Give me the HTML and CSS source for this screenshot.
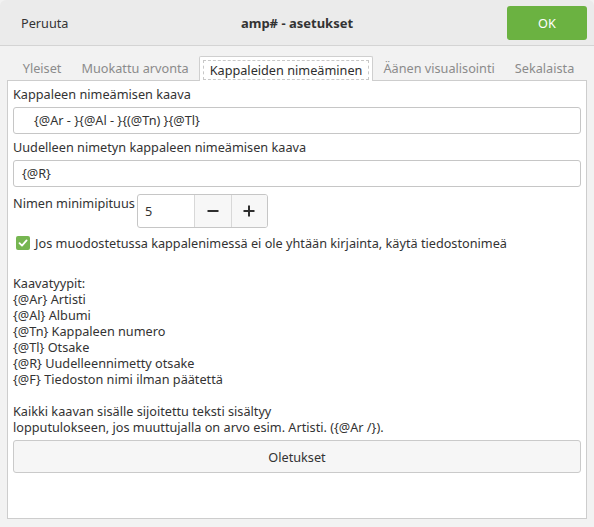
FILE: index.html
```html
<!DOCTYPE html>
<html>
<head>
<meta charset="utf-8">
<link rel="stylesheet" href="styles.css">
</head>
<body>
<div class="window">
  <header class="headerbar">
    <button class="hb-cancel">Peruuta</button>
    <div class="hb-title">amp# - asetukset</div>
    <button class="hb-ok">OK</button>
  </header>
  <div class="content">
    <nav class="tabs">
      <div class="tab">Yleiset</div>
      <div class="tab">Muokattu arvonta</div>
      <div class="tab active"><span class="focus">Kappaleiden nimeäminen</span></div>
      <div class="tab">Äänen visualisointi</div>
      <div class="tab">Sekalaista</div>
    </nav>
    <section class="panel">
      <div class="label">Kappaleen nimeämisen kaava</div>
      <div class="entry entry-indent">{@Ar - }{@Al - }{(@Tn) }{@Tl}</div>
      <div class="label">Uudelleen nimetyn kappaleen nimeämisen kaava</div>
      <div class="entry">{@R}</div>
      <div class="spinrow">
        <div class="spinlabel">Nimen minimipituus</div>
        <div class="spin">
          <div class="spin-val">5</div>
          <div class="spin-btn">
            <svg width="12" height="12" viewBox="0 0 12 12"><rect x="0.5" y="5" width="11" height="2" fill="#2e2e2e"/></svg>
          </div>
          <div class="spin-btn">
            <svg width="12" height="12" viewBox="0 0 12 12"><rect x="0.5" y="5" width="11" height="2" fill="#2e2e2e"/><rect x="5" y="0.5" width="2" height="11" fill="#2e2e2e"/></svg>
          </div>
        </div>
      </div>
      <label class="check">
        <span class="checkbox">
          <svg width="14" height="14" viewBox="0 0 14 14"><path d="M3.5 7.2 L6 9.6 L10.6 4.4" fill="none" stroke="#fff" stroke-width="1.8" stroke-linecap="round" stroke-linejoin="round"/></svg>
        </span>
        <span>Jos muodostetussa kappalenimessä ei ole yhtään kirjainta, käytä tiedostonimeä</span>
      </label>
      <div class="info">
        <p>Kaavatyypit:<br>{@Ar} Artisti<br>{@Al} Albumi<br>{@Tn} Kappaleen numero<br>{@Tl} Otsake<br>{@R} Uudelleennimetty otsake<br>{@F} Tiedoston nimi ilman päätettä</p>
        <p>Kaikki kaavan sisälle sijoitettu teksti sisältyy<br>lopputulokseen, jos muuttujalla on arvo esim. Artisti. ({@Ar /}).</p>
      </div>
      <button class="defaults">Oletukset</button>
    </section>
  </div>
</div>
</body>
</html>
```
FILE: styles.css
```css
* { box-sizing: border-box; }
html, body { margin: 0; padding: 0; }
body {
  width: 594px;
  height: 527px;
  background: #f2f2f2;
  font-family: "Noto Sans", "Open Sans", sans-serif;
  font-size: 12.7px;
  color: #333333;
  overflow: hidden;
}
.window { height: 527px; display: flex; flex-direction: column; }
.headerbar {
  height: 46px;
  flex: none;
  background: #ebebeb;
  border-bottom: 1px solid #d4d4d4;
  border-radius: 6px 6px 0 0;
  display: flex;
  align-items: center;
  position: relative;
  padding: 0 7px 0 7px;
}
.headerbar button { font: inherit; border: 0; }
.hb-cancel {
  background: transparent;
  color: #333333;
  padding: 0 14px;
  height: 34px;
  font-size: 13px;
}
.hb-title {
  position: absolute;
  left: 0; right: 0;
  text-align: center;
  font-weight: bold;
  font-size: 13px;
  pointer-events: none;
}
.hb-ok {
  margin-left: auto;
  width: 80px;
  height: 34px;
  background: #6bb241;
  color: #fff;
  border-radius: 3px;
  font-size: 14px;
}
.content { flex: 1; display: flex; flex-direction: column; padding: 0 7px 8px 7px; }
.tabs {
  display: flex;
  justify-content: center;
  align-items: flex-end;
  height: 34px;
  flex: none;
  padding-left: 3px;
  white-space: nowrap;
}
.tab {
  flex: none;
  color: #8b8b8b;
  padding: 0 10px;
  height: 24px;
  line-height: 22px;
  margin-bottom: -1px;
}
.tab.active {
  color: #2e2e2e;
  background: #fff;
  border: 1px solid #cfcfcf;
  border-bottom: 0;
  border-radius: 2px 2px 0 0;
  height: 25px;
  padding: 3px 3px 0 3px;
  line-height: 18px;
  position: relative;
  z-index: 1;
}
.tab.active .focus {
  display: block;
  border: 1px dashed #c8c8c8;
  padding: 0 6px;
  height: 20px;
}
.panel {
  flex: 1;
  background: #fff;
  border: 1px solid #cdcdcd;
  padding: 4px 5px 0 5px;
  display: flex;
  flex-direction: column;
}
.label { height: 18px; line-height: 18px; }
.entry {
  height: 27px;
  flex: none;
  border: 1px solid #c6c6c6;
  border-radius: 3px;
  margin-top: 4px;
  margin-bottom: 4px;
  line-height: 25px;
  padding-left: 8px;
  background: #fff;
}
.entry-indent { padding-left: 20px; }
.spinrow { display: flex; align-items: flex-start; gap: 2px; margin-top: 3px; }
.spinlabel { line-height: 18px; }
.spin {
  display: flex;
  height: 34px;
  border: 1px solid #c6c6c6;
  border-radius: 3px;
  overflow: hidden;
}
.spin-val { width: 56px; padding-left: 7px; line-height: 32px; }
.spin-btn {
  width: 37px;
  border-left: 1px solid #d8d8d8;
  background: #f7f7f7;
  display: flex;
  align-items: center;
  justify-content: center;
}
.spin-btn + .spin-btn { width: 36px; }
.check { display: flex; align-items: center; gap: 5px; margin-top: 7px; padding-left: 3px; height: 16px; }
.checkbox {
  width: 14px; height: 14px;
  background: #76b651;
  border-radius: 2px;
  display: flex;
}
.info { margin-top: 24px; line-height: 16px; }
.info p { margin: 0 0 16px 0; }
.info p:last-child { margin-bottom: 0; }
.defaults {
  margin-top: 5px;
  height: 33px;
  flex: none;
  font: inherit;
  color: #333333;
  background: #f6f6f6;
  border: 1px solid #cacaca;
  border-radius: 3px;
}
```
